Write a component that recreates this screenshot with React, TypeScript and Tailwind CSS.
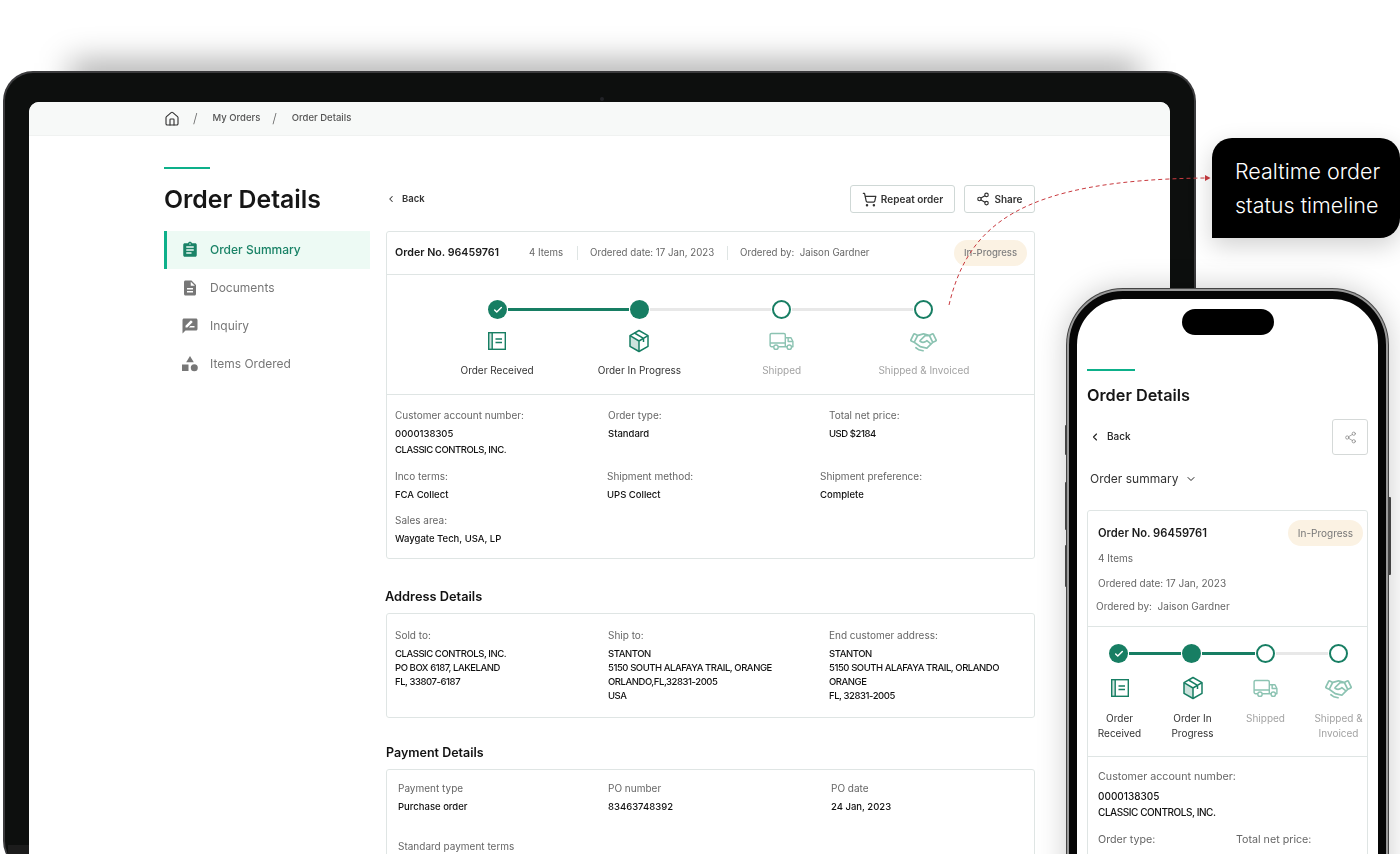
import { ChevronDown, ChevronLeft, Check, House, Share2, ShoppingCart } from 'lucide-react';
import { MdAssignment, MdDescription, MdRateReview } from 'react-icons/md';
import { PiHandshake } from 'react-icons/pi';

const BookIcon = ({ className }: { className?: string }) => (
    <svg viewBox="0 0 20 20" fill="none" stroke="currentColor" strokeWidth="1.4" className={className}>
        <path d="M2 2h3.200v16H2z" fill="currentColor" fillOpacity="0.2" stroke="none" />
        <rect x="1.700" y="1.700" width="16.600" height="16.600" />
        <path d="M5.200 2v16M8.500 8h6.500M8.500 11.500h6.500" />
    </svg>
);

const BoxIcon = ({ className }: { className?: string }) => (
    <svg viewBox="0 0 22 24" fill="none" stroke="currentColor" strokeWidth="1.500" strokeLinejoin="round" className={className}>
        <path d="M2 7.200v10l9 5 0-10.200z" fill="currentColor" fillOpacity="0.22" stroke="none" />
        <path d="M11 1.500l9 5.200v10.600l-9 5.200-9-5.200V6.700z" />
        <path d="M2 6.700l9 5.300 9-5.300M11 12v10.500M6.500 4l9 5.300v3.700" />
    </svg>
);

const TruckIcon = ({ className }: { className?: string }) => (
    <svg viewBox="0 0 26 20" fill="none" stroke="currentColor" strokeWidth="1.500" strokeLinejoin="round" className={className}>
        <path d="M5 15.500H2.500a1.500 1.500 0 0 1-1.500-1.500V3a1.500 1.500 0 0 1 1.500-1.500h13A1.500 1.500 0 0 1 17 3v12.500H9.500M17 15.500h2M23.500 15.500H25V10l-2-4h-6" />
        <path d="M1 11.500h16M20 6v4h5" />
        <circle cx="7.200" cy="16" r="2.300" />
        <circle cx="21.200" cy="16" r="2.300" />
    </svg>
);

const ShapesIcon = ({ className }: { className?: string }) => (
    <svg viewBox="0 0 16 16" fill="currentColor" className={className}>
        <path d="M8 0l3.800 6.300H4.200z" />
        <rect x="0" y="8.500" width="6.500" height="6.500" />
        <circle cx="12.300" cy="11.800" r="3.500" />
    </svg>
);

const steps = [
    { label: 'Order Received', Icon: BookIcon, done: true },
    { label: 'Order In Progress', Icon: BoxIcon, done: true },
    { label: 'Shipped', Icon: TruckIcon, done: false },
    { label: 'Shipped & Invoiced', Icon: PiHandshake, done: false },
];

const Dot = ({ kind }: { kind: 'check' | 'full' | 'open' }) => {
    if (kind === 'open') {
        return <div className="h-[19px] w-[19px] shrink-0 rounded-full border-2 border-[#177e63] bg-white" />;
    }
    return (
        <div className="flex h-[19px] w-[19px] shrink-0 items-center justify-center rounded-full bg-[#177e63] text-white">
            {kind === 'check' && <Check size={10} strokeWidth={3.5} />}
        </div>
    );
};

const Track = ({ on }: { on: boolean }) => (
    <div className={on ? 'mx-[1px] h-[3px] flex-1 bg-[#177e63]' : 'mx-[1px] h-[3px] flex-1 bg-[#e8e8e8]'} />
);

const iconSizes = ['h-[20px] w-[20px]', 'h-[24px] w-[22px]', 'h-[19px] w-[25px]', 'h-[27px] w-[27px]'];

const DesktopTimeline = () => (
    <div className="h-[120px] border-b border-[#dfe5e4] pt-[25px]">
        <div className="ml-[101px] flex w-[445px] items-center">
            <Dot kind="check" />
            <Track on />
            <Dot kind="full" />
            <Track on={false} />
            <Dot kind="open" />
            <Track on={false} />
            <Dot kind="open" />
        </div>
        <div className="ml-[39px] grid w-[569px] grid-cols-4">
            {steps.map((s, i) => (
                <div key={s.label} className="flex flex-col items-center">
                    <div className={s.done ? 'mt-[9px] flex h-[26px] items-center text-[#177e63]' : 'mt-[9px] flex h-[26px] items-center text-[#8cc3b2]'}>
                        <s.Icon className={iconSizes[i]} />
                    </div>
                    <div className={s.done ? 'mt-[9px] text-[10px] leading-[14px] text-[#333]' : 'mt-[9px] text-[10px] leading-[14px] text-[#a3a3a3]'}>{s.label}</div>
                </div>
            ))}
        </div>
    </div>
);

const isCaps = (l: string) => l === l.toUpperCase() && /[A-Z]/.test(l);

const Field = ({ label, lines, compact, large }: { label: string; lines: string[]; compact?: boolean; large?: boolean }) => (
    <div>
        <div className={large ? 'text-[10.7px] leading-[14px] text-[#666]' : 'text-[10px] leading-[14px] text-[#666]'}>{label}</div>
        <div className={compact ? 'mt-[5px] text-[9.5px] font-medium leading-[14px] text-[#111]' : large ? 'mt-[4px] text-[10px] font-medium leading-[16px] text-[#111]' : 'mt-[4px] text-[9.5px] font-medium leading-[16px] text-[#111]'}>
            {lines.map((l) => (
                <div key={l} className={isCaps(l) ? 'tracking-[-0.44px]' : ''}>{l}</div>
            ))}
        </div>
    </div>
);

const Laptop = () => (
    <div className="absolute left-[3px] top-[71px] h-[800px] w-[1193px] rounded-[30px] border-[2px] border-b-0 border-[#3b3b3d] bg-[#0d0f0e] px-[24px] pt-[29px]">
        <div className="absolute left-[595px] top-[24px] h-[4px] w-[4px] rounded-full bg-[#222327]" />
        <div className="absolute left-[3px] top-[772px] h-[26px] w-[21px] bg-[#1c1c1c]" />
        <div className="h-full overflow-hidden rounded-t-[10px] bg-white blur-[0.25px]">
            <div className="flex h-[34px] items-center border-b border-[#f0f2f1] bg-[#f7f9f8] pl-[135px] text-[9.5px] font-medium text-[#555]">
                <House size={16} strokeWidth={1.7} className="text-[#333]" />
                <span className="ml-[13px] text-[13px] font-light text-[#666]">/</span>
                <span className="ml-[15px]">My Orders</span>
                <span className="ml-[12px] text-[13px] font-light text-[#666]">/</span>
                <span className="ml-[15px]">Order Details</span>
            </div>
            <div className="flex pl-[135px]">
                <div className="w-[206px] pt-[31px]">
                    <div className="h-[2px] w-[46px] bg-[#0db08a]" />
                    <div className="mt-[14px] text-[24.800px] font-semibold leading-[32px] text-[#161616]">Order Details</div>
                    <div className="mt-[16px]">
                        <div className="flex h-[38px] items-center border-l-[3px] border-[#0db08a] bg-[#edfaf4] pl-[14px] text-[12px] font-medium text-[#1a8367]">
                            <MdAssignment size={18} />
                            <span className="ml-[11px]">Order Summary</span>
                        </div>
                        <div className="flex h-[38px] items-center pl-[17px] text-[12px] text-[#777]">
                            <MdDescription size={18} />
                            <span className="ml-[11px]">Documents</span>
                        </div>
                        <div className="flex h-[38px] items-center pl-[17px] text-[12px] text-[#777]">
                            <MdRateReview size={18} />
                            <span className="ml-[11px]">Inquiry</span>
                        </div>
                        <div className="flex h-[38px] items-center pl-[17px] text-[12px] text-[#777]">
                            <ShapesIcon className="ml-[1px] h-[16px] w-[16px]" />
                            <span className="ml-[12px]">Items Ordered</span>
                        </div>
                    </div>
                </div>
                <div className="ml-[16px] w-[649px] pt-[49px]">
                    <div className="flex h-[28px] items-center">
                        <ChevronLeft size={10} strokeWidth={2.5} className="text-[#333]" />
                        <span className="ml-[6px] text-[9.5px] font-semibold text-[#333]">Back</span>
                        <div className="ml-auto flex h-[28px] w-[105px] items-center justify-center gap-[4px] rounded-[3px] border border-[#cfd8d6] text-[10px] font-semibold text-[#333]">
                            <ShoppingCart size={15} strokeWidth={2} />
                            Repeat order
                        </div>
                        <div className="ml-[9px] flex h-[28px] w-[71px] items-center justify-center gap-[4px] rounded-[3px] border border-[#cfd8d6] text-[10px] font-semibold text-[#333]">
                            <Share2 size={14} strokeWidth={2} />
                            Share
                        </div>
                    </div>
                    <div className="mt-[18px] h-[328px] rounded-[3px] border border-[#dfe5e4]">
                        <div className="flex h-[43px] items-center border-b border-[#dfe5e4] pl-[8px] pr-[7px]">
                            <span className="w-[134px] text-[10.700px] font-semibold text-[#1b1b1b]">Order No. 96459761</span>
                            <span className="w-[48px] text-[9.700px] text-[#666]">4 Items</span>
                            <span className="h-[14px] border-l border-[#dfe5e4]" />
                            <span className="w-[149px] pl-[12px] text-[9.700px] text-[#666]">Ordered date: 17 Jan, 2023</span>
                            <span className="h-[14px] border-l border-[#dfe5e4]" />
                            <span className="pl-[12px] text-[9.700px] text-[#666]">Ordered by:&nbsp; Jaison Gardner</span>
                            <span className="ml-auto flex h-[26px] w-[73px] items-center justify-center rounded-full bg-[#fbf2e3] text-[9.5px] font-medium text-[#808080]">In-Progress</span>
                        </div>
                        <DesktopTimeline />
                        <div className="pl-[8px] pt-[13px]">
                            <div className="grid grid-cols-[213px_221px_1fr]">
                                <Field label="Customer account number:" lines={['0000138305', 'CLASSIC CONTROLS, INC.']} />
                                <Field label="Order type:" lines={['Standard']} />
                                <Field label="Total net price:" lines={['USD $2184']} />
                            </div>
                            <div className="mt-[11px] grid grid-cols-[212px_213px_1fr]">
                                <Field label="Inco terms:" lines={['FCA Collect']} />
                                <Field label="Shipment method:" lines={['UPS Collect']} />
                                <Field label="Shipment preference:" lines={['Complete']} />
                            </div>
                            <div className="mt-[10px]">
                                <Field label="Sales area:" lines={['Waygate Tech, USA, LP']} />
                            </div>
                        </div>
                    </div>
                    <div className="mt-[29px] -ml-[1px] text-[12.800px] font-semibold leading-[18px] text-[#111]">Address Details</div>
                    <div className="mt-[7px] grid h-[105px] grid-cols-[213px_221px_1fr] rounded-[3px] border border-[#dfe5e4] pl-[8px] pt-[14px]">
                        <Field compact label="Sold to:" lines={['CLASSIC CONTROLS, INC.', 'PO BOX 6187, LAKELAND', 'FL, 33807-6187']} />
                        <Field compact label="Ship to:" lines={['STANTON', '5150 SOUTH ALAFAYA TRAIL, ORANGE', 'ORLANDO,FL,32831-2005', 'USA']} />
                        <Field compact label="End customer address:" lines={['STANTON', '5150 SOUTH ALAFAYA TRAIL, ORLANDO', 'ORANGE', 'FL, 32831-2005']} />
                    </div>
                    <div className="mt-[26px] text-[12.500px] font-semibold leading-[18px] text-[#111]">Payment Details</div>
                    <div className="mt-[7px] h-[120px] rounded-[3px] border border-[#dfe5e4] pl-[11px] pt-[11px]">
                        <div className="grid grid-cols-[210px_223px_1fr]">
                            <Field label="Payment type" lines={['Purchase order']} />
                            <Field label="PO number" lines={['83463748392']} />
                            <Field label="PO date" lines={['24 Jan, 2023']} />
                        </div>
                        <div className="mt-[24px] text-[10px] leading-[14px] text-[#666]">Standard payment terms</div>
                    </div>
                </div>
            </div>
        </div>
    </div>
);

const Phone = () => (
    <div className="absolute left-[1067px] top-[289px] h-[640px] w-[321px] rounded-[56px] bg-[#9a9a9a] p-[2px] shadow-[0_0_30px_rgba(0,0,0,0.22)] ring-1 ring-[#444]">
        <div className="h-full overflow-hidden rounded-[54px] border-[8px] border-[#060606] bg-white">
            <div className="blur-[0.25px]">
                <div className="mx-auto mt-[10px] h-[26px] w-[92px] rounded-[13px] bg-black" />
                <div className="px-[10px] pt-[34px]">
                    <div className="h-[2px] w-[48px] bg-[#0db08a]" />
                    <div className="mt-[13px] text-[16.300px] font-semibold leading-[22px] text-[#161616]">Order Details</div>
                    <div className="mt-[13px] flex h-[36px] items-center">
                        <ChevronLeft size={12} strokeWidth={2.2} className="ml-[2px] text-[#222]" />
                        <span className="ml-[6px] pb-[1px] text-[10px] font-medium text-[#222]">Back</span>
                        <div className="ml-auto flex h-[36px] w-[36px] items-center justify-center rounded-[3px] border border-[#d5d9d8] text-[#888]">
                            <Share2 size={13} strokeWidth={1.4} />
                        </div>
                    </div>
                    <div className="ml-[3px] mt-[15px] flex h-[18px] items-center text-[12px] text-[#333]">
                        Order summary
                        <ChevronDown size={12} strokeWidth={2} className="ml-[7px] text-[#222]" />
                    </div>
                    <div className="mt-[22px] rounded-[3px] border border-[#dfe5e4]">
                        <div className="h-[116px] border-b border-[#dfe5e4] pl-[10px] pr-[4px] pt-[9px]">
                            <div className="flex h-[26px] items-center justify-between">
                                <span className="text-[11.200px] font-semibold text-[#1b1b1b]">Order No. 96459761</span>
                                <span className="flex h-[26px] w-[75px] items-center justify-center rounded-full bg-[#fbf2e3] text-[10px] text-[#777]">In-Progress</span>
                            </div>
                            <div className="mt-[5px] text-[10px] leading-[14px] text-[#666]">4 Items</div>
                            <div className="mt-[11px] text-[10px] leading-[14px] text-[#666]">Ordered date: 17 Jan, 2023</div>
                            <div className="-ml-[2px] mt-[9px] text-[10px] leading-[14px] text-[#666]">Ordered by:&nbsp; Jaison Gardner</div>
                        </div>
                        <div className="h-[130px] border-b border-[#dfe5e4] pt-[17px]">
                            <div className="ml-[21px] flex w-[239px] items-center">
                                <Dot kind="check" />
                                <Track on />
                                <Dot kind="full" />
                                <Track on />
                                <Dot kind="open" />
                                <Track on={false} />
                                <Dot kind="open" />
                            </div>
                            <div className="ml-[-5px] grid w-[292px] grid-cols-4">
                                {steps.map((s, i) => (
                                    <div key={s.label} className="flex flex-col items-center">
                                        <div className={s.done ? 'mt-[12px] flex h-[26px] items-center text-[#177e63]' : 'mt-[12px] flex h-[26px] items-center text-[#8cc3b2]'}>
                                            <s.Icon className={iconSizes[i]} />
                                        </div>
                                        <div className={s.done ? 'mt-[10px] w-[66px] text-center text-[10px] leading-[15px] text-[#333]' : 'mt-[10px] w-[66px] text-center text-[10px] leading-[15px] text-[#a3a3a3]'}>{s.label}</div>
                                    </div>
                                ))}
                            </div>
                        </div>
                        <div className="pl-[10px] pt-[13px]">
                            <Field large label="Customer account number:" lines={['0000138305', 'CLASSIC CONTROLS, INC.']} />
                            <div className="mt-[13px] grid grid-cols-[138px_1fr]">
                                <Field large label="Order type:" lines={['Standard']} />
                                <Field large label="Total net price:" lines={['USD $2184']} />
                            </div>
                        </div>
                    </div>
                </div>
            </div>
        </div>
    </div>
);

const App = () => (
    <div className="relative h-[854px] w-[1400px] overflow-hidden bg-white font-['Inter',sans-serif]">
        <div className="absolute left-[70px] top-[62px] h-[30px] w-[1070px] bg-black/35 blur-[16px]" />
        <Laptop />
        <svg className="absolute left-0 top-0 h-[854px] w-[1400px]" viewBox="0 0 1400 854" fill="none">
            <path d="M949 305C968 225 1020 180 1205 178" stroke="#c93a3f" strokeWidth="1" strokeDasharray="4 3" />
            <path d="M1205 175l5.500 3-5.500 3z" fill="#c93a3f" />
        </svg>
        <div className="absolute left-[1212px] top-[138px] flex h-[100px] w-[188px] flex-col justify-center rounded-[20px] rounded-bl-none bg-black pl-[23px] text-[21.500px] font-light leading-[34px] text-white shadow-[0_8px_24px_rgba(0,0,0,0.18)]">
            <div>Realtime order</div>
            <div>status timeline</div>
        </div>
        <div className="absolute left-[1065px] top-[425px] h-[30px] w-[3px] rounded-l-[1px] bg-[#4a4a4a]" />
        <div className="absolute left-[1065px] top-[482px] h-[48px] w-[3px] rounded-l-[1px] bg-[#4a4a4a]" />
        <div className="absolute left-[1065px] top-[545px] h-[42px] w-[3px] rounded-l-[1px] bg-[#4a4a4a]" />
        <div className="absolute left-[1388px] top-[497px] h-[78px] w-[3px] rounded-r-[1px] bg-[#4a4a4a]" />
        <Phone />
    </div>
);

export default App;
